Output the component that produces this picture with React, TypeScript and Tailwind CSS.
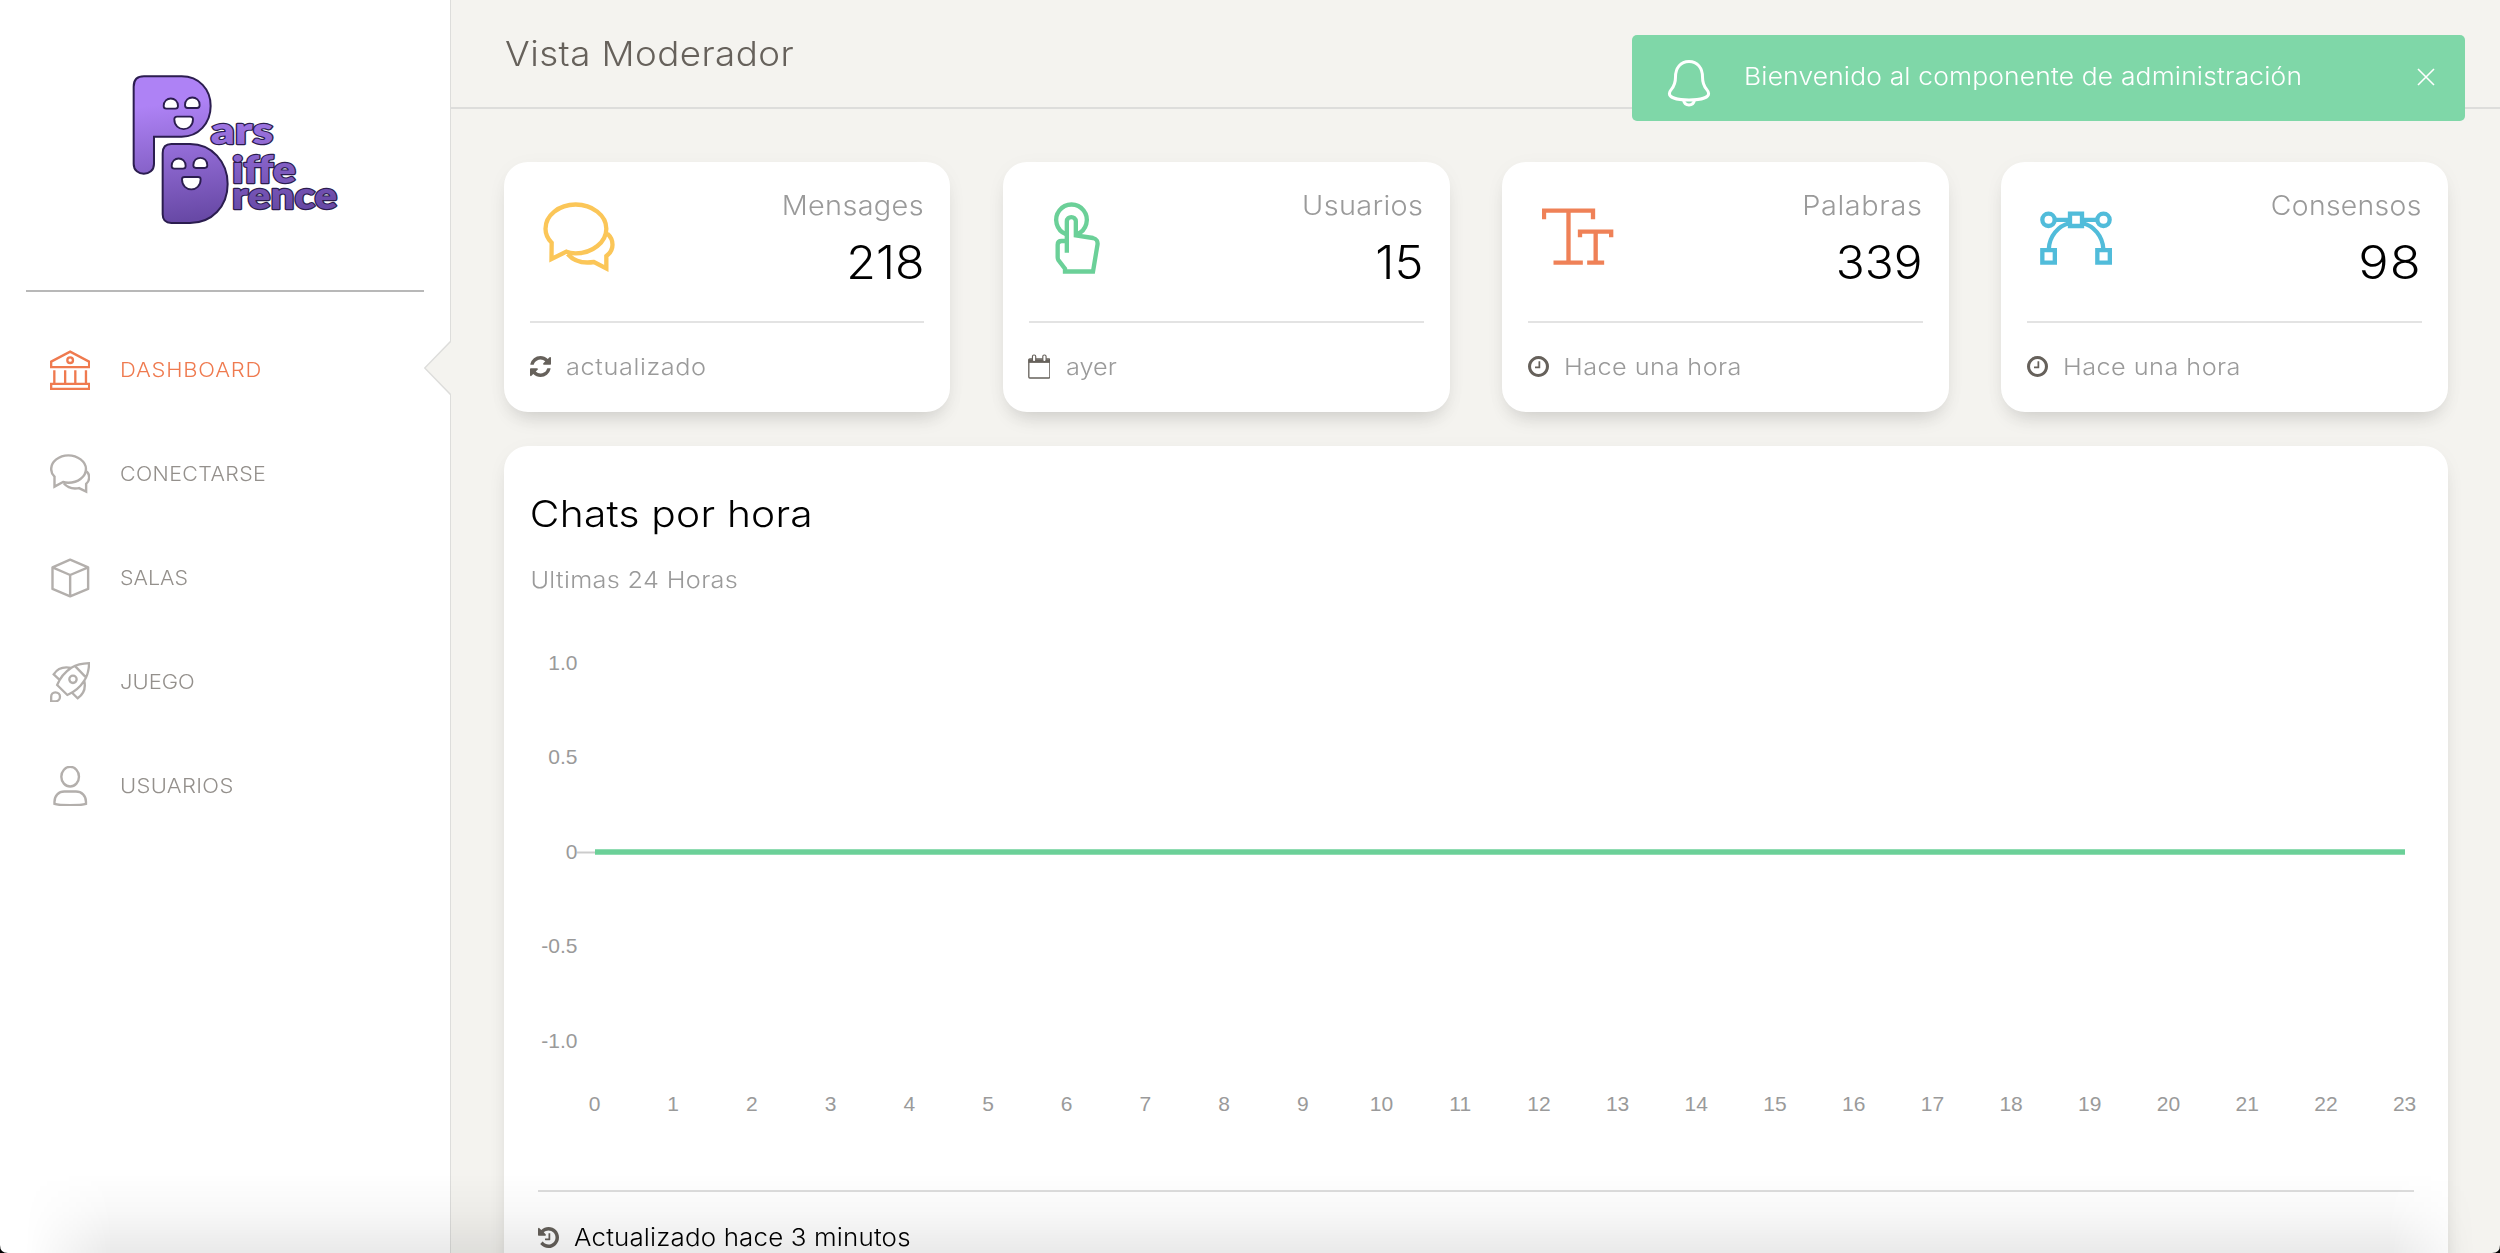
import type { ReactNode } from "react";

type IconProps = { className?: string };

const stroke = { fill: "none", stroke: "currentColor" } as const;

function ChatIcon({ className }: IconProps) {
  return (
    <svg viewBox="188 607 216 216" className={className} {...stroke} strokeWidth="13">
      <path d="M214 729C203 718 195.500 704 195.500 687C195.500 647 236 614.500 286 614.500S378 647 378 687C378 727 337 761 286 761C276 761 266 760 258 756L213.500 778Z" />
      <path d="M381 702C391 711 396.500 722 396.500 735C396.500 748 390 760 378 769V806L341 787C335 788 328 788.500 321 788.500C297 788.500 275 778 262 763" />
    </svg>
  );
}

function SideChatIcon({ className }: IconProps) {
  return (
    <svg viewBox="149 521 121 121" className={className} {...stroke} strokeWidth="7.200">
      <path d="M162.500 589C156 583 152.500 575 152.500 566C152.500 544 176 525 204 525S257 544 257 566C257 589 233 607.500 204 607.500C198 607.500 193 607 188 605L162.500 619Z" />
      <path d="M259 573C264 578 266.500 585 266.500 592C266.500 600 263 606 257.500 611V634L236 623.500C232 624.500 228 624.500 224 624.500C210 624.500 198 618 190 609" />
    </svg>
  );
}

function TapIcon({ className }: IconProps) {
  return (
    <svg viewBox="187 187 216 216" className={className} {...stroke} strokeWidth="13">
      <path d="M258 283A46 46 0 1 1 293 283" />
      <path d="M261.500 339V245C261.500 228 288.500 228 288.500 245V287L340 295C350 297 355 305 353.500 315L340 395.500H256V387L236 361Q234 358 234 353V315C234 308 238 304 246 304H261" />
    </svg>
  );
}

function CapsIcon({ className }: IconProps) {
  return (
    <svg viewBox="184.500 187 216 216" className={className} {...stroke} strokeWidth="13">
      <path d="M190.500 239V213H337.500V239M264 213V369M219 369H307M298.500 293V276H392V293M345.500 276V369M320 369H371" />
    </svg>
  );
}

function VectorIcon({ className }: IconProps) {
  return (
    <svg viewBox="183 187 216 216" className={`overflow-visible ${className}`} {...stroke} strokeWidth="13">
      <circle cx="205.500" cy="240.500" r="18.500" />
      <circle cx="370.500" cy="240.500" r="18.500" />
      <path d="M270 222H306V259H270ZM187 331.500H224.500V369H187ZM352 331.500H389.500V369H352ZM224 240.500H270M306 240.500H352M206.500 328C208 290 234 258 270 250M370 328C368 290 342 258 306 250" />
    </svg>
  );
}

function BankIcon({ className }: IconProps) {
  return (
    <svg viewBox="149 211 121 121" className={className} {...stroke} strokeWidth="7">
      <path d="M152.500 246L209.500 216L266.500 246V262.500H152.500ZM162 272V310M194.500 272V310M225 272V310M257 272V310M152.500 312.500H266.500V327.500H152.500Z" />
      <circle cx="209.500" cy="241.500" r="8.500" />
    </svg>
  );
}

function BoxIcon({ className }: IconProps) {
  return (
    <svg viewBox="149 85 121 121" className={className} {...stroke} strokeWidth="7.200" strokeLinejoin="round">
      <path d="M209.500 90L263.500 113V178L209.500 200L156.500 178V113ZM156.500 113L209.500 136L263.500 113M209.500 136V200" />
    </svg>
  );
}

function RocketIcon({ className }: IconProps) {
  return (
    <svg viewBox="149 397 121 121" className={className} {...stroke} strokeWidth="7">
      <path d="M266.500 400.500C250 401 230 404 213 414C195 426 180 442 170.500 466L201 496C226 486 241 470 252 453C263 436 266 418 266.500 400.500ZM225 410L257 443M213 415C195 411 174 413 160 434L177 450M252 454C256 472 252 492 232 506L216 490M152.500 515V501C152.500 493 158 488 165 488C173 488 179 494 179 501C179 509 173 515 165 515Z" />
      <circle cx="218" cy="449" r="11" />
    </svg>
  );
}

function UserIcon({ className }: IconProps) {
  return (
    <svg viewBox="149 709 121 121" className={className} {...stroke} strokeWidth="7.200">
      <ellipse cx="209.500" cy="741" rx="26.500" ry="29.500" />
      <path d="M162.500 823V816C162.500 798 175 785.500 192 785.500H227C244 785.500 257 798 257 816V823C240 828 179 828 162.500 823Z" />
    </svg>
  );
}

function BellIcon({ className }: IconProps) {
  return (
    <svg viewBox="0 0 48 48" className={className} {...stroke} strokeWidth="3">
      <path d="M24 2.500C15.500 2.500 10.500 9 10.500 18C10.500 30 4.400 30 4.400 34.500C4.400 38.500 12 41 24 41S43.600 38.500 43.600 34.500C43.600 30 37.500 30 37.500 18C37.500 9 32.500 2.500 24 2.500Z" />
      <path d="M18.500 41Q19.500 46 24 46T29.500 41" />
    </svg>
  );
}

function Glyph({ d, box, className }: { d: string; box: string; className?: string }) {
  return (
    <svg viewBox={box} className={className} fill="currentColor">
      <path d={d} />
    </svg>
  );
}

const REFRESH =
  "M1511 928q0 5-1 7-64 268-268 434.500t-478 166.500q-146 0-282.500-55t-243.500-157l-129 129q-19 19-45 19t-45-19-19-45v-448q0-26 19-45t45-19h448q26 0 45 19t19 45-19 45l-137 137q71 66 161 102t187 36q134 0 250-65t186-179q11-17 53-117 8-23 30-23h192q13 0 22.500 9.500t9.500 22.500zm25-800v448q0 26-19 45t-45 19h-448q-26 0-45-19t-19-45 19-45l138-138q-148-137-349-137-134 0-250 65t-186 179q-11 17-53 117-8 23-30 23h-199q-13 0-22.500-9.500t-9.500-22.500v-7q65-268 270-434.500t480-166.500q146 0 284 55.500t245 156.500l130-129q19-19 45-19t45 19 19 45z";
const CLOCK =
  "M896 544v448q0 14-9 23t-23 9h-320q-14 0-23-9t-9-23v-64q0-14 9-23t23-9h224v-352q0-14 9-23t23-9h64q14 0 23 9t9 23zm416 352q0-148-73-273t-198-198-273-73-273 73-198 198-73 273 73 273 198 198 273 73 273-73 198-198 73-273zm224 0q0 209-103 385.500t-279.500 279.500-385.500 103-385.500-103-279.500-279.500-103-385.500 103-385.500 279.500-279.500 385.500-103 385.500 103 279.500 279.500 103 385.500z";
const HISTORY =
  "M1536 896q0 156-61 298t-164 245-245 164-298 61q-172 0-327-72.500t-264-204.500q-7-10-6.500-22.500t8.500-20.500l137-138q10-9 25-9 16 2 23 12 73 95 179 147t225 52q104 0 198.500-40.500t163.500-109.500 109.500-163.500 40.500-198.500-40.500-198.500-109.500-163.500-163.500-109.500-198.500-40.500q-98 0-188 35.500t-160 101.500l137 138q31 30 14 69-17 40-59 40h-448q-26 0-45-19t-19-45v-448q0-42 40-59 39-17 69 14l130 129q107-101 244.500-156.500t284.500-55.500q156 0 298 61t245 164 164 245 61 298zm-640-288v448q0 14-9 23t-23 9h-320q-14 0-23-9t-9-23v-64q0-14 9-23t23-9h224v-352q0-14 9-23t23-9h64q14 0 23 9t9 23z";

function CalendarIcon() {
  return (
    <svg viewBox="146 640 68 76" className="-ml-[1px] h-[25px] w-[22.700px]" fill="none" stroke="currentColor">
      <path d="M147 656H213V667H147Z" fill="currentColor" stroke="none" />
      <rect x="148" y="655" width="64" height="58" rx="3" strokeWidth="4" />
      <rect x="159" y="643" width="10" height="20" rx="4.500" fill="white" strokeWidth="3.500" />
      <rect x="190.500" y="643" width="10" height="20" rx="4.500" fill="white" strokeWidth="3.500" />
    </svg>
  );
}

function Logo() {
  const text = {
    fontFamily: "Lato",
    fontWeight: 800,
    fontSize: 112,
    fill: "url(#brand)",
    stroke: "#2b1d4f",
    strokeWidth: 7,
    strokeLinejoin: "round" as const,
    paintOrder: "stroke" as const,
    lengthAdjust: "spacingAndGlyphs",
  };
  return (
    <svg viewBox="90 60 640 480" className="mt-[70px] ml-[130px] h-[160px] w-[213.300px]">
      <defs>
        <linearGradient id="brand" gradientUnits="userSpaceOnUse" x1="300" y1="150" x2="340" y2="500">
          <stop offset="0" stopColor="#ae82f5" />
          <stop offset="1" stopColor="#6849a6" />
        </linearGradient>
      </defs>
      <text x="332" y="282" textLength="188" {...text}>ars</text>
      <text x="396" y="398" textLength="192" {...text}>iffe</text>
      <text x="396" y="477" textLength="316" {...text}>rence</text>
      <g fill="url(#brand)" stroke="#2b1d4f" strokeWidth="6">
        <path d="M101 110Q101 79 132 79H245C297 79 332 118 332 168C332 220 295 260 245 260H162V342C162 381 101 381 101 342Z" />
        <path d="M188 310Q188 282 214 282H270C335 282 383 335 383 402C383 470 335 519 270 519H214Q188 519 188 493Z" />
      </g>
      <g fill="white" stroke="#2b1d4f" strokeWidth="5.500">
        <path d="M191 168C191 138 234 138 234 168Q234 176 226 176H199Q191 176 191 168Z" />
        <path d="M255 165C255 135 299 135 299 165Q299 174 291 174H263Q255 174 255 165Z" />
        <path d="M223 208Q223 200 231 200H271Q279 200 279 208C279 247 223 247 223 208Z" />
        <path d="M215 348C215 318 257 318 257 348Q257 356 249 356H223Q215 356 215 348Z" />
        <path d="M280 346C280 316 322 316 322 346Q322 354 314 354H288Q280 354 280 346Z" />
        <path d="M246 388Q246 381 254 381H294Q302 381 302 388C302 428 246 428 246 388Z" />
      </g>
    </svg>
  );
}

function NavItem({ icon, label, className }: { icon: ReactNode; label: string; className: string }) {
  return (
    <a className="flex h-[104px] items-center pl-[49.700px]">
      {icon}
      <span className={`ml-[30px] origin-left text-[20px] leading-none font-light ${className}`}>{label}</span>
    </a>
  );
}

type Stat = { icon: ReactNode; title: string; titleClass: string; value: string; valueClass: string; footIcon: ReactNode; foot: string; footClass: string };

const clock = <Glyph d={CLOCK} box="0 128 1536 1536" className="size-[21px]" />;

const stats: Stat[] = [
  { icon: <ChatIcon className="size-[72px] text-[#fbc658]" />, title: "Mensages", titleClass: "scale-x-[1.07] tracking-[0.300px]", value: "218", valueClass: "scale-x-[1.05]", footIcon: <Glyph d={REFRESH} box="0 0 1536 1536" className="size-[21px]" />, foot: "actualizado", footClass: "scale-x-[1.1] tracking-[0.550px]" },
  { icon: <TapIcon className="size-[72px] text-[#6bd098]" />, title: "Usuarios", titleClass: "scale-x-[1.07] tracking-[0.300px]", value: "15", valueClass: "scale-x-[1.06]", footIcon: <CalendarIcon />, foot: "ayer", footClass: "ml-[1px] scale-x-[1.1]" },
  { icon: <CapsIcon className="size-[72px] text-[#ef8157]" />, title: "Palabras", titleClass: "scale-x-[1.07] tracking-[0.600px]", value: "339", valueClass: "scale-x-[1.04]", footIcon: clock, foot: "Hace una hora", footClass: "scale-x-[1.1] tracking-[0.400px]" },
  { icon: <VectorIcon className="size-[72px] text-[#51bcda]" />, title: "Consensos", titleClass: "scale-x-[1.05] tracking-[0.300px]", value: "98", valueClass: "scale-x-[1.1] tracking-[1px]", footIcon: clock, foot: "Hace una hora", footClass: "scale-x-[1.1] tracking-[0.400px]" },
];

const cardShadow = "shadow-[0_12px_20px_-8px_rgba(0,0,0,0.15),0_4px_24px_-4px_rgba(0,0,0,0.05)]";

function StatCard({ s }: { s: Stat }) {
  return (
    <div className={`h-[250px] rounded-[24px] bg-white px-[26px] ${cardShadow}`}>
      <div className="flex h-[161px] justify-between border-b-2 border-[#e3e3e3]">
        <div className="ml-[13.500px] pt-[40.500px]">{s.icon}</div>
        <div className="flex flex-col items-end pt-[30px] whitespace-nowrap">
          <span className={`origin-right text-[27px] leading-none font-light text-[#9a9a9a] ${s.titleClass}`}>{s.title}</span>
          <span className={`mt-[20px] origin-right text-[46px] leading-none font-light text-black ${s.valueClass}`}>{s.value}</span>
        </div>
      </div>
      <div className="flex items-center pt-[32px] text-[#66615b]">
        <div className="flex h-[23px] w-[36px] items-center">{s.footIcon}</div>
        <span className={`mt-px origin-left text-[23px] leading-none font-light text-[#9a9a9a] ${s.footClass}`}>{s.foot}</span>
      </div>
    </div>
  );
}

const yTicks = ["1.0", "0.5", "0", "-0.5", "-1.0"];
const hours = Array.from({ length: 24 }, (_, i) => i);

function HourChart() {
  return (
    <svg viewBox="0 0 1944 520" className="block h-[520px] w-[1944px]" fontFamily="Liberation Sans, Arial, sans-serif" fontSize="21" fill="#9a9a9a">
      {yTicks.map((t, i) => (
        <text key={t} x="73.500" y={49.500 + i * 94.600} textAnchor="end">{t}</text>
      ))}
      <path d="M73 232.500H91" stroke="#cccccc" strokeWidth="2" />
      <path d="M91 232H1901" stroke="#6bd098" strokeWidth="5.500" />
      {hours.map((h) => (
        <text key={h} x={90.500 + h * 78.700} y="490.500" textAnchor="middle">{h}</text>
      ))}
    </svg>
  );
}

export default function App() {
  return (
    <div className="relative flex h-[1253px] w-[2500px] overflow-hidden bg-[#f4f3ef] font-['Inter',sans-serif]">
      <aside className="relative h-full w-[451px] shrink-0 border-r-[1.500px] border-[#dddddb] bg-white">
        <Logo />
        <div className="mx-[26px] mt-[60px] h-[2px] bg-[#b8b8b8]" />
        <nav className="mt-[26px] text-[#b3afac]">
          <NavItem icon={<BankIcon className="size-[40.300px] text-[#ef7a4f]" />} label="DASHBOARD" className="scale-x-[1.1] tracking-[0.700px] text-[#ef7a4f]" />
          <NavItem icon={<SideChatIcon className="size-[40.300px]" />} label="CONECTARSE" className="scale-x-[1.07] tracking-[0.350px] text-[#94908c]" />
          <NavItem icon={<BoxIcon className="size-[40.300px]" />} label="SALAS" className="scale-x-[1.07] text-[#94908c]" />
          <NavItem icon={<RocketIcon className="size-[40.300px]" />} label="JUEGO" className="scale-x-[1.1] text-[#94908c]" />
          <NavItem icon={<UserIcon className="size-[40.300px]" />} label="USUARIOS" className="scale-x-[1.1] tracking-[0.300px] text-[#94908c]" />
        </nav>
        <svg viewBox="0 0 28 54" className="absolute top-[341px] -right-[2px] h-[54px] w-[28px]">
          <path d="M28 0.500L26.300 1L0.700 27L26.300 53L28 53.500Z" fill="#f4f3ef" />
          <path d="M26.500 0.500L0.700 27L26.500 53.500" fill="none" stroke="#dddddb" strokeWidth="1.500" />
        </svg>
      </aside>

      <main className="flex-1">
        <header className="h-[109px] border-b-2 border-[#dddddb] pt-[36.500px] pl-[54px]">
          <h1 className="origin-left scale-x-[1.08] text-[34px] leading-none font-light tracking-[0.400px] text-[#66615b]">Vista Moderador</h1>
        </header>
        <div className="pt-[52.500px] pr-[52px] pl-[52.500px]">
          <section className="grid grid-cols-4 gap-[52.500px]">
            {stats.map((s) => (
              <StatCard key={s.title} s={s} />
            ))}
          </section>
          <section className={`mt-[34.500px] h-[900px] rounded-[24px] bg-white ${cardShadow}`}>
            <h2 className="origin-left scale-x-[1.1] pt-[49px] pl-[23.500px] text-[37px] leading-none font-light tracking-[0.200px] text-black">Chats por hora</h2>
            <p className="mt-[37px] origin-left scale-x-[1.1] pl-[24px] text-[23px] leading-none font-light tracking-[0.300px] text-[#9a9a9a]">Ultimas 24 Horas</p>
            <div className="mt-[28px]">
              <HourChart />
            </div>
            <div className="mx-[34.500px] mt-[50px] flex items-center border-t-2 border-[#dddddd] pt-[33.500px] text-[#66615b]">
              <Glyph d={HISTORY} box="0 128 1536 1536" className="size-[21px]" />
              <span className="ml-[15px] origin-left scale-x-[1.08] text-[24px] leading-none font-light tracking-[0.150px] text-black">Actualizado hace 3 minutos</span>
            </div>
          </section>
        </div>
      </main>

      <div className="absolute top-[34.500px] left-[1632px] flex h-[86.500px] w-[833px] items-start rounded-[5px] bg-[#7fd7a8] text-white">
        <BellIcon className="mt-[24px] ml-[33px] size-[48px]" />
        <span className="mt-[30px] ml-[31px] origin-left scale-x-[1.1] text-[24px] leading-none font-light tracking-[0.150px] whitespace-nowrap">Bienvenido al componente de administración</span>
        <svg viewBox="0 0 18 18" className="absolute top-[33px] right-[30px] size-[18px]" stroke="white" strokeWidth="1.600">
          <path d="M1 1L17 17M17 1L1 17" />
        </svg>
      </div>

      <div className="pointer-events-none absolute inset-x-0 bottom-0 h-[80px] bg-gradient-to-t from-black/[0.085] via-black/[0.03] to-transparent [mask-image:linear-gradient(to_right,transparent_1%,black_4.500%,black_95.500%,transparent_99%)]" />
      <svg viewBox="0 0 8 8" className="absolute bottom-0 left-0 size-[8px]">
        <path d="M0 0Q0 8 8 8H0Z" />
      </svg>
      <svg viewBox="0 0 8 8" className="absolute right-0 bottom-0 size-[8px]">
        <path d="M8 0Q8 8 0 8H8Z" />
      </svg>
    </div>
  );
}
